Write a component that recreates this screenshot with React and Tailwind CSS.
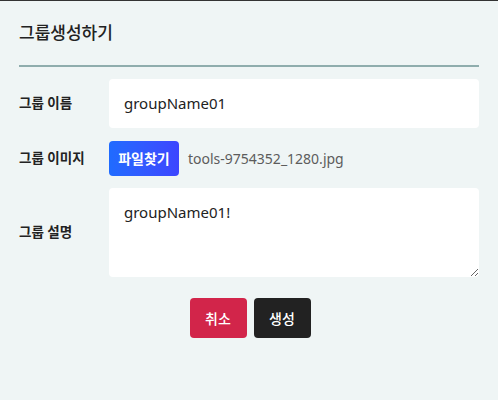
import React from "react";

export default function App() {
  return (
    <div
      className="w-[498px] h-[400px] bg-[#eff5f5] border-t border-[#333333] px-[19px] text-[#222222]"
      style={{ fontFamily: '"Noto Sans", "Noto Sans CJK KR", sans-serif' }}
    >
      <div className="h-[66px] pt-[20px] border-b-2 border-[#8fadad] box-border">
        <h1 className="text-[17px] font-medium leading-[24px]">그룹생성하기</h1>
      </div>
      <div className="flex flex-col mt-[12px]">
        <div className="flex items-center">
          <div className="w-[90px] text-[13.5px] font-semibold">그룹 이름</div>
          <div className="flex-1 h-[49px] bg-white rounded-[4px] flex items-center px-[15px] text-[15px]">
            groupName01
          </div>
        </div>
        <div className="flex items-center mt-[13px]">
          <div className="w-[90px] text-[13.5px] font-semibold">그룹 이미지</div>
          <button className="w-[70px] h-[35px] rounded-[4px] bg-gradient-to-r from-[#1f6bff] to-[#3d45ff] text-white text-[14px] font-semibold">
            파일찾기
          </button>
          <span className="ml-[9px] text-[14px] text-[#5c5c5c]">tools-9754352_1280.jpg</span>
        </div>
        <div className="flex items-center mt-[12px]">
          <div className="w-[90px] text-[13.5px] font-semibold">그룹 설명</div>
          <textarea
            className="flex-1 h-[89px] bg-white rounded-[4px] px-[15px] pt-[13px] text-[15px] outline-none"
            defaultValue="groupName01!"
            style={{ fontFamily: '"Noto Sans", sans-serif' }}
          />
        </div>
        <div className="flex justify-center gap-[7px] mt-[21px] pl-[2px]">
          <button className="w-[57px] h-[40px] rounded-[4px] bg-[#d2254a] text-white text-[14px] font-medium">취소</button>
          <button className="w-[57px] h-[40px] rounded-[4px] bg-[#222222] text-white text-[14px] font-medium">생성</button>
        </div>
      </div>
    </div>
  );
}
